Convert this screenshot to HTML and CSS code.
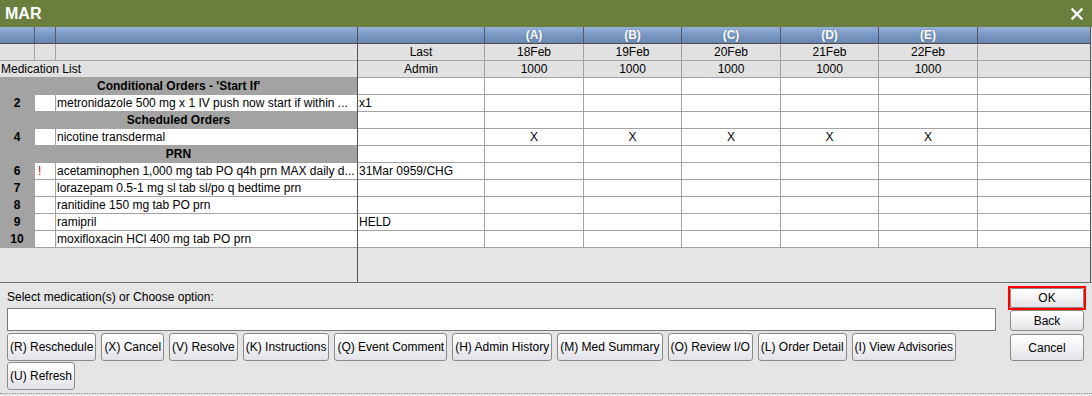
FILE: index.html
```html
<!DOCTYPE html>
<html>
<head>
<meta charset="utf-8">
<link rel="stylesheet" href="styles.css">
</head>
<body>
<div class="titlebar">
  <span class="title">MAR</span>
  <svg class="close" width="12" height="12" viewBox="0 0 12 12"><path d="M1.5 1.5 L10.5 10.5 M10.5 1.5 L1.5 10.5" stroke="#fff" stroke-width="2.4" stroke-linecap="square"/></svg>
</div>
<div class="mar">
  <div class="pane pane-left">
    <div class="hd"></div><div class="hd"></div><div class="hd end"></div>
    <div class="sub"></div><div class="sub"></div><div class="sub end"></div>
    <div class="sub span3 left">Medication List</div>

    <div class="grp span3">Conditional Orders - 'Start If'</div>
    <div class="num">2</div><div class="flag"></div><div class="med end">metronidazole 500 mg x 1 IV push now start if within ...</div>
    <div class="grp span3">Scheduled Orders</div>
    <div class="num">4</div><div class="flag"></div><div class="med end">nicotine transdermal</div>
    <div class="grp span3">PRN</div>
    <div class="num">6</div><div class="flag alert">!</div><div class="med end">acetaminophen 1,000 mg tab PO q4h prn MAX daily d...</div>
    <div class="num">7</div><div class="flag"></div><div class="med end">lorazepam 0.5-1 mg sl tab sl/po q bedtime prn</div>
    <div class="num">8</div><div class="flag"></div><div class="med end">ranitidine 150 mg tab PO prn</div>
    <div class="num">9</div><div class="flag"></div><div class="med end">ramipril</div>
    <div class="num">10</div><div class="flag"></div><div class="med end">moxifloxacin HCl 400 mg tab PO prn</div>
  </div>
  <div class="pane pane-right">
    <div class="hd"></div><div class="hd">(A)</div><div class="hd">(B)</div><div class="hd">(C)</div><div class="hd">(D)</div><div class="hd">(E)</div><div class="hd end"></div>
    <div class="sub">Last</div><div class="sub">18Feb</div><div class="sub">19Feb</div><div class="sub">20Feb</div><div class="sub">21Feb</div><div class="sub">22Feb</div><div class="sub end"></div>
    <div class="sub">Admin</div><div class="sub">1000</div><div class="sub">1000</div><div class="sub">1000</div><div class="sub">1000</div><div class="sub">1000</div><div class="sub end"></div>

    <div class="c l"></div><div class="c"></div><div class="c"></div><div class="c"></div><div class="c"></div><div class="c"></div><div class="c end"></div>
    <div class="c l">x1</div><div class="c"></div><div class="c"></div><div class="c"></div><div class="c"></div><div class="c"></div><div class="c end"></div>
    <div class="c l"></div><div class="c"></div><div class="c"></div><div class="c"></div><div class="c"></div><div class="c"></div><div class="c end"></div>
    <div class="c l"></div><div class="c">X</div><div class="c">X</div><div class="c">X</div><div class="c">X</div><div class="c">X</div><div class="c end"></div>
    <div class="c l"></div><div class="c"></div><div class="c"></div><div class="c"></div><div class="c"></div><div class="c"></div><div class="c end"></div>
    <div class="c l">31Mar 0959/CHG</div><div class="c"></div><div class="c"></div><div class="c"></div><div class="c"></div><div class="c"></div><div class="c end"></div>
    <div class="c l"></div><div class="c"></div><div class="c"></div><div class="c"></div><div class="c"></div><div class="c"></div><div class="c end"></div>
    <div class="c l"></div><div class="c"></div><div class="c"></div><div class="c"></div><div class="c"></div><div class="c"></div><div class="c end"></div>
    <div class="c l">HELD</div><div class="c"></div><div class="c"></div><div class="c"></div><div class="c"></div><div class="c"></div><div class="c end"></div>
    <div class="c l"></div><div class="c"></div><div class="c"></div><div class="c"></div><div class="c"></div><div class="c"></div><div class="c end"></div>
  </div>
</div>
<div class="bottom">
  <div class="bottom-left">
    <div class="prompt">Select medication(s) or Choose option:</div>
    <div class="input"></div>
    <div class="actions">
      <button class="btn">(R) Reschedule</button>
      <button class="btn">(X) Cancel</button>
      <button class="btn">(V) Resolve</button>
      <button class="btn">(K) Instructions</button>
      <button class="btn">(Q) Event Comment</button>
      <button class="btn">(H) Admin History</button>
      <button class="btn">(M) Med Summary</button>
      <button class="btn">(O) Review I/O</button>
      <button class="btn">(L) Order Detail</button>
      <button class="btn">(I) View Advisories</button>
      <button class="btn">(U) Refresh</button>
    </div>
  </div>
  <div class="bottom-right">
    <div class="ok-focus"><button class="btn side ok">OK</button></div>
    <button class="btn side back">Back</button>
    <button class="btn side cancel">Cancel</button>
  </div>
</div>
<div class="dots"></div>
</body>
</html>
```

FILE: styles.css
```css
* { box-sizing: border-box; }
body {
  margin: 0;
  width: 1092px;
  height: 396px;
  overflow: hidden;
  background: #e5e5e5;
  font: 12px "Liberation Sans", Arial, sans-serif;
  color: #000;
}
.titlebar {
  height: 27px;
  background: #6a7f3e;
  display: flex;
  align-items: center;
  justify-content: space-between;
  padding: 0 9px 0 5px;
  color: #fff;
}
.title { font-weight: bold; font-size: 16px; }
.close { display: block; }

.mar {
  display: flex;
  height: 256px;
  border-bottom: 1px solid #707070;
}
.pane {
  display: grid;
  grid-auto-rows: 17px;
  align-content: start;
  border-right: 1px solid #555;
}
.pane-left {
  width: 358px;
  grid-template-columns: 35px 21px 301px;
}
.pane-right {
  width: 733px;
  grid-template-columns: 127px 99px 98px 99px 98px 99px 112px;
}
.pane > div {
  border-right: 1px solid #a3a3a3;
  border-bottom: 1px solid #a3a3a3;
  line-height: 16px;
  white-space: nowrap;
  overflow: hidden;
}
.pane > div.end { border-right: none; }

.pane > .hd {
  background: linear-gradient(#93b0d8, #7593bd 60%, #6a88b3);
  border-right: 1px solid #515a66;
  border-bottom: 1px solid #4b4b4b;
  color: #fff;
  font-weight: bold;
  text-align: center;
  text-shadow: 0 0 1px rgba(40, 60, 90, 0.5);
}
.pane > .sub {
  background: #e1e1e1;
  text-align: center;
}
.pane > .sub.left { text-align: left; padding-left: 1px; }
.span3 { grid-column: 1 / span 3; border-right: none !important; }
.pane > .grp {
  background: #a3a3a3;
  font-weight: bold;
  text-align: center;
}
.pane > .num {
  background: #a3a3a3;
  font-weight: bold;
  text-align: center;
}
.pane > .flag { background: #fff; padding-left: 3px; }
.pane > .flag.alert { color: #e00000; }
.pane > .med { background: #fff; padding-left: 1px; }
.pane > .c { background: #fff; text-align: center; }
.pane > .c.l { text-align: left; padding-left: 1px; }

.bottom {
  display: flex;
  height: 110px;
}
.bottom-left {
  width: 989px;
  margin-left: 7px;
  padding-top: 7px;
}
.prompt { line-height: 14px; }
.input {
  margin-top: 4px;
  height: 23px;
  background: #fff;
  border: 1px solid #7a7a7a;
}
.actions {
  margin-top: 2px;
  display: flex;
  flex-wrap: wrap;
  gap: 1px 5px;
}
.btn {
  height: 28px;
  padding: 0 2px;
  border: 1px solid #8a8a8a;
  border-radius: 3px;
  background: linear-gradient(#ffffff, #f3f3f5 50%, #e2e2e8);
  font: 12px "Liberation Sans", Arial, sans-serif;
  color: #000;
  margin: 0;
}
.bottom-right {
  margin-left: 12px;
  width: 78px;
  padding-top: 3px;
  display: flex;
  flex-direction: column;
  align-items: center;
}
.ok-focus {
  width: 78px;
  height: 24px;
  border: 2px solid #ff0000;
}
.btn.side { width: 74px; padding: 0; }
.btn.ok { width: 74px; height: 20px; display: block; border-radius: 2px; }
.btn.back { height: 21px; }
.btn.cancel { height: 27px; margin-top: 3px; }

.dots {
  border-top: 1px dotted #8c8c8c;
}
```
